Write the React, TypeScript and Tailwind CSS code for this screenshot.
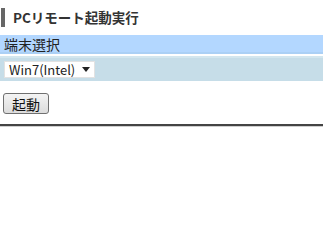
export default function App() {
  return (
    <div
      className="w-[323px] h-[214px] bg-white text-[#222]"
      style={{ fontFamily: '"Noto Sans CJK JP", "Noto Sans", sans-serif' }}
    >
      <div className="pt-[8px]">
        <h1 className="ml-[1px] h-[19px] border-l-4 border-[#666] pl-[8px] flex items-center text-[13.5px] font-semibold leading-none text-[#333]">
          PCリモート起動実行
        </h1>
      </div>

      <div className="mt-[8px] h-[19px] bg-[#b3d7ff] border-b-2 border-[#abd0f5] pl-[4px] flex items-center text-[14px] leading-none">
        端末選択
      </div>

      <div className="mt-[2px] h-[25px] bg-[#c6dde8] border-t-2 border-[#d3e6ee] pl-[4px] pt-[3px]">
        <div className="w-[91px] h-[17px] bg-white border border-[#e2e2e2] pl-[4px] pr-[4px] flex items-center justify-between text-[13px] leading-none text-[#222]">
          <span>Win7(Intel)</span>
          <svg width="8" height="5" viewBox="0 0 8 5">
            <path d="M0 0h8L4 5z" fill="#222" />
          </svg>
        </div>
      </div>

      <div className="mt-[12px] pl-[3px]">
        <button className="w-[46px] h-[21px] rounded-[3px] border border-[#707070] bg-gradient-to-b from-[#f4f4f4] to-[#dcdcdc] text-[14px] leading-none text-[#111] flex items-center justify-center">
          起動
        </button>
      </div>

      <div className="mt-[10px] border-t-2 border-[#444] border-b border-b-[#cfcfcf]" />
    </div>
  );
}
